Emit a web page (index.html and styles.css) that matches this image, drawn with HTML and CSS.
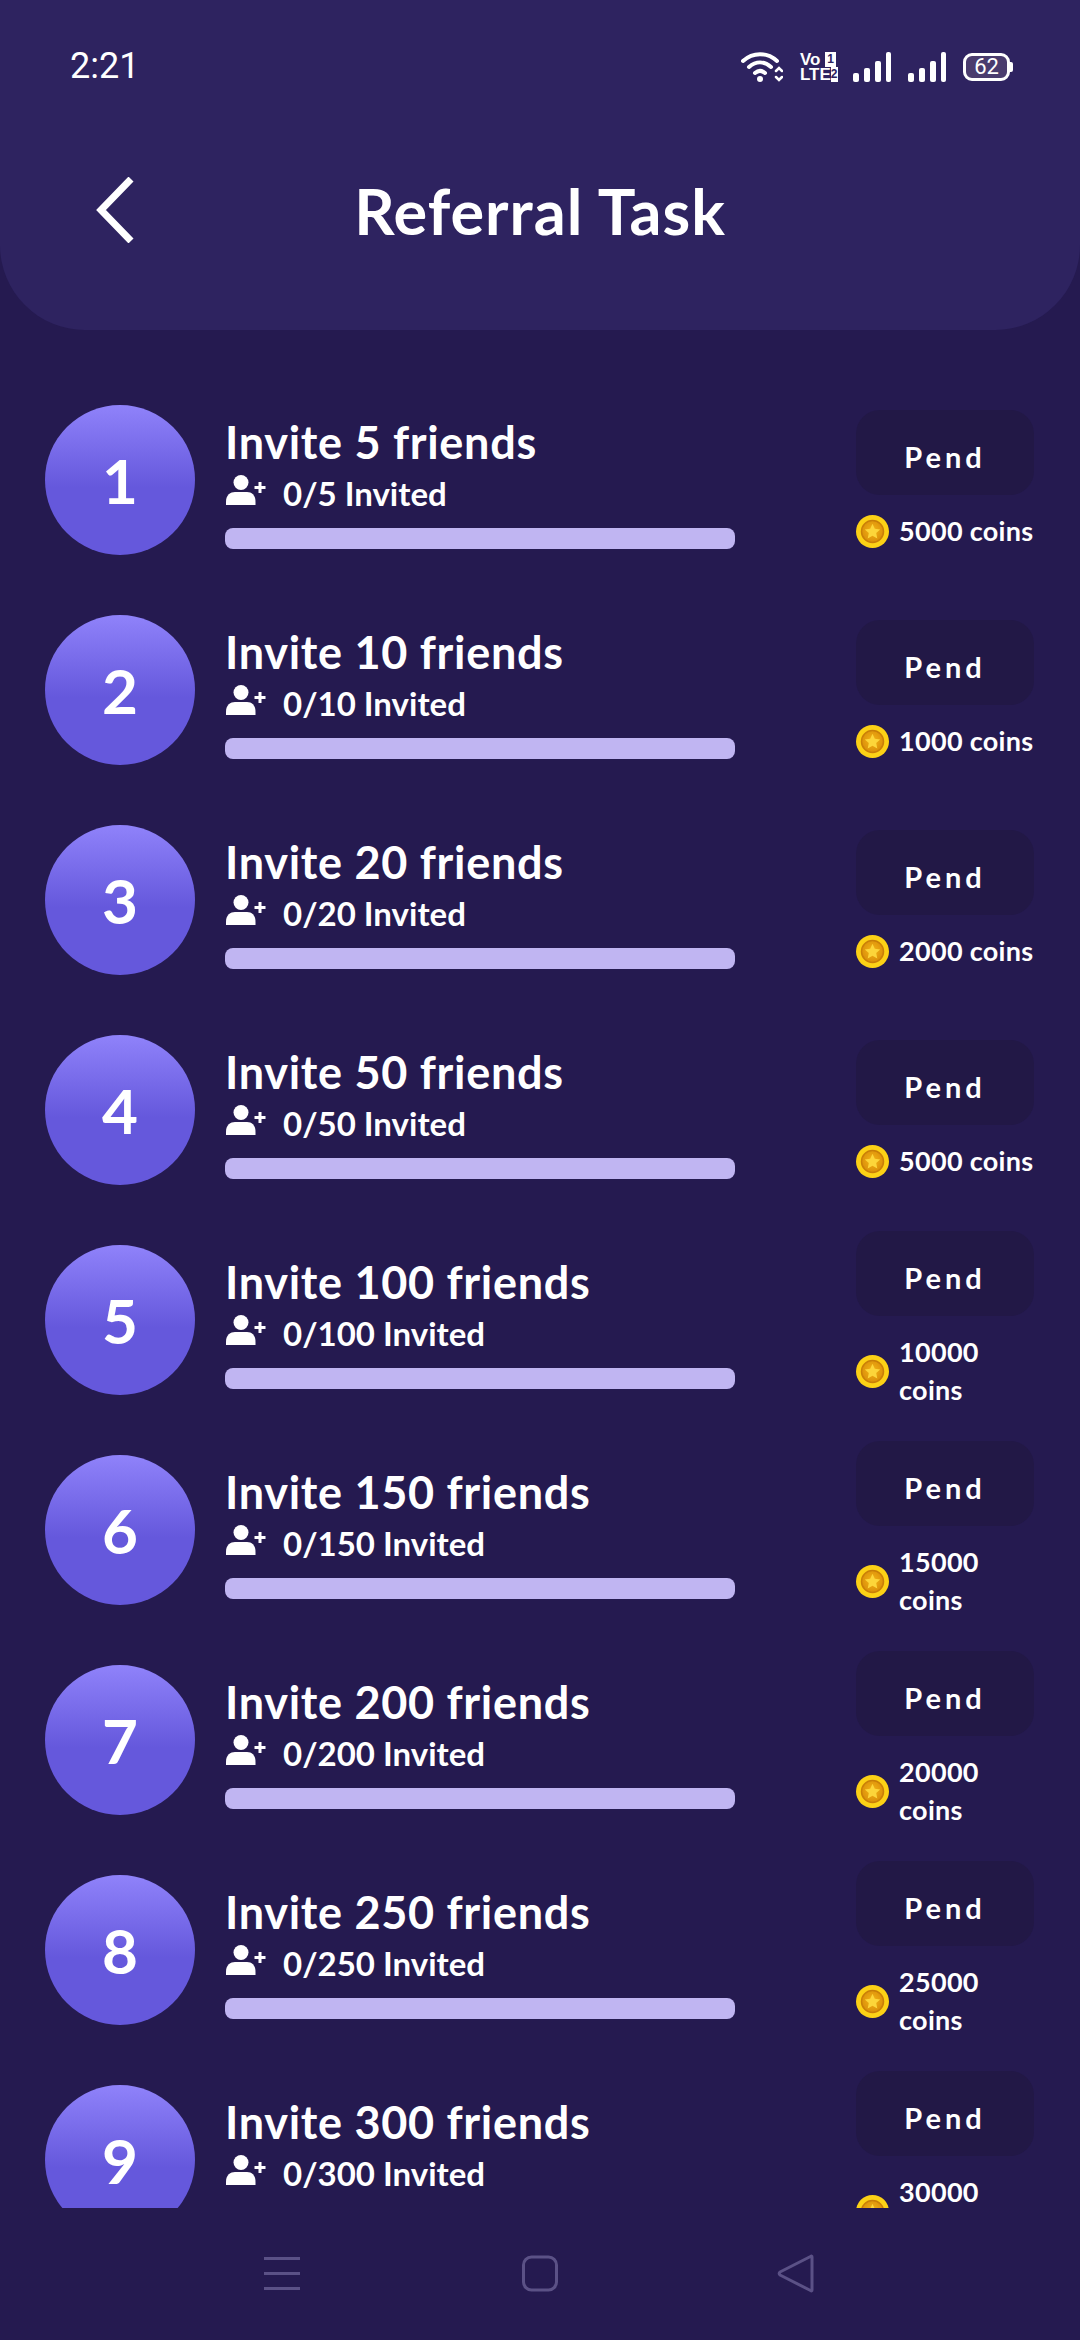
FILE: index.html
```html
<!DOCTYPE html>
<html lang="en">
<head>
    <meta charset="UTF-8">
    <title>Referral Task</title>
    <link rel="stylesheet" href="styles.css">
</head>
<body>
    <svg class="icon-defs" aria-hidden="true">
        <defs>
            <radialGradient id="coinFace" cx="50%" cy="45%" r="55%">
                <stop offset="0" stop-color="#f3b415"/>
                <stop offset="1" stop-color="#d98d0a"/>
            </radialGradient>
            <symbol id="userPlus" viewBox="0 0 40 30">
                <circle cx="15" cy="7.500" r="7.500" fill="#fff"/>
                <path d="M0 30v-3.500C0 20 4.500 17 9 17h12c4.500 0 8.500 3 8.500 9.500V30z" fill="#fff"/>
                <path d="M34 7v11M28.500 12.500h11" stroke="#fff" stroke-width="3" fill="none"/>
            </symbol>
            <symbol id="coin" viewBox="0 0 33 33">
                <circle cx="16.500" cy="16.500" r="16.500" fill="#fcd116"/>
                <path d="M28.200 4.800A16.500 16.500 0 0 1 4.800 28.200 16.500 16.500 0 0 0 28.200 4.800z" fill="#e8a20c"/>
                <circle cx="16.500" cy="16.500" r="11" fill="url(#coinFace)" stroke="#c97f08" stroke-width="1.500"/>
                <path d="M16.500 8.800l2.300 5 5.400.6-4 3.700 1.100 5.400-4.800-2.700-4.800 2.700 1.100-5.400-4-3.700 5.400-.6z" fill="#fcd53a"/>
            </symbol>
        </defs>
    </svg>

    <header class="app-header">
        <div class="status-bar">
            <span class="clock">2:21</span>
            <div class="status-icons">
                <svg class="wifi" width="42" height="32" viewBox="0 0 42 32" fill="none" stroke="#fff" stroke-linecap="round">
                    <path d="M2 10C12 1 26 1 36 10" stroke-width="4"/>
                    <path d="M8 16c7-6 15-6 22 0" stroke-width="4"/>
                    <path d="M14 22c3.500-3 6.500-3 10 0" stroke-width="4"/>
                    <circle cx="19" cy="28" r="3" fill="#fff" stroke="none"/>
                    <path d="M35 20l3-3 3 3M35 26l3 3 3-3" stroke-width="2.500"/>
                </svg>
                <div class="volte">
                    <div class="volte-line">Vo<span class="sim">1</span></div>
                    <div class="volte-line">LTE<span class="sim">2</span></div>
                </div>
                <svg width="38" height="30" viewBox="0 0 38 30" fill="#fff">
                    <rect x="0" y="21" width="6" height="9" rx="2"/>
                    <rect x="11" y="16" width="6" height="14" rx="2"/>
                    <rect x="22" y="9" width="6" height="21" rx="2"/>
                    <rect x="33" y="0" width="5" height="30" rx="2"/>
                </svg>
                <svg width="38" height="30" viewBox="0 0 38 30" fill="#fff">
                    <rect x="0" y="21" width="6" height="9" rx="2"/>
                    <rect x="11" y="16" width="6" height="14" rx="2"/>
                    <rect x="22" y="9" width="6" height="21" rx="2"/>
                    <rect x="33" y="0" width="5" height="30" rx="2"/>
                </svg>
                <div class="battery"><span class="battery-body">62</span><span class="battery-cap"></span></div>
            </div>
        </div>
        <div class="title-bar">
            <svg class="back" width="38" height="66" viewBox="0 0 38 66" fill="none" stroke="#fff" stroke-width="7">
                <path d="M35 2L5 33l30 31"/>
            </svg>
            <h1>Referral Task</h1>
        </div>
    </header>

    <main class="task-list">
        <div class="task">
            <div class="badge">1</div>
            <div class="info">
                <div class="task-title">Invite 5 friends</div>
                <div class="invited"><svg class="user-icon"><use href="#userPlus"/></svg>0/5 Invited</div>
                <div class="progress"></div>
            </div>
            <div class="reward">
                <div class="pend">Pend</div>
                <div class="coins"><svg class="coin"><use href="#coin"/></svg><span>5000 coins</span></div>
            </div>
        </div>
        <div class="task">
            <div class="badge">2</div>
            <div class="info">
                <div class="task-title">Invite 10 friends</div>
                <div class="invited"><svg class="user-icon"><use href="#userPlus"/></svg>0/10 Invited</div>
                <div class="progress"></div>
            </div>
            <div class="reward">
                <div class="pend">Pend</div>
                <div class="coins"><svg class="coin"><use href="#coin"/></svg><span>1000 coins</span></div>
            </div>
        </div>
        <div class="task">
            <div class="badge">3</div>
            <div class="info">
                <div class="task-title">Invite 20 friends</div>
                <div class="invited"><svg class="user-icon"><use href="#userPlus"/></svg>0/20 Invited</div>
                <div class="progress"></div>
            </div>
            <div class="reward">
                <div class="pend">Pend</div>
                <div class="coins"><svg class="coin"><use href="#coin"/></svg><span>2000 coins</span></div>
            </div>
        </div>
        <div class="task">
            <div class="badge">4</div>
            <div class="info">
                <div class="task-title">Invite 50 friends</div>
                <div class="invited"><svg class="user-icon"><use href="#userPlus"/></svg>0/50 Invited</div>
                <div class="progress"></div>
            </div>
            <div class="reward">
                <div class="pend">Pend</div>
                <div class="coins"><svg class="coin"><use href="#coin"/></svg><span>5000 coins</span></div>
            </div>
        </div>
        <div class="task">
            <div class="badge">5</div>
            <div class="info">
                <div class="task-title">Invite 100 friends</div>
                <div class="invited"><svg class="user-icon"><use href="#userPlus"/></svg>0/100 Invited</div>
                <div class="progress"></div>
            </div>
            <div class="reward">
                <div class="pend">Pend</div>
                <div class="coins"><svg class="coin"><use href="#coin"/></svg><span>10000 coins</span></div>
            </div>
        </div>
        <div class="task">
            <div class="badge">6</div>
            <div class="info">
                <div class="task-title">Invite 150 friends</div>
                <div class="invited"><svg class="user-icon"><use href="#userPlus"/></svg>0/150 Invited</div>
                <div class="progress"></div>
            </div>
            <div class="reward">
                <div class="pend">Pend</div>
                <div class="coins"><svg class="coin"><use href="#coin"/></svg><span>15000 coins</span></div>
            </div>
        </div>
        <div class="task">
            <div class="badge">7</div>
            <div class="info">
                <div class="task-title">Invite 200 friends</div>
                <div class="invited"><svg class="user-icon"><use href="#userPlus"/></svg>0/200 Invited</div>
                <div class="progress"></div>
            </div>
            <div class="reward">
                <div class="pend">Pend</div>
                <div class="coins"><svg class="coin"><use href="#coin"/></svg><span>20000 coins</span></div>
            </div>
        </div>
        <div class="task">
            <div class="badge">8</div>
            <div class="info">
                <div class="task-title">Invite 250 friends</div>
                <div class="invited"><svg class="user-icon"><use href="#userPlus"/></svg>0/250 Invited</div>
                <div class="progress"></div>
            </div>
            <div class="reward">
                <div class="pend">Pend</div>
                <div class="coins"><svg class="coin"><use href="#coin"/></svg><span>25000 coins</span></div>
            </div>
        </div>
        <div class="task">
            <div class="badge">9</div>
            <div class="info">
                <div class="task-title">Invite 300 friends</div>
                <div class="invited"><svg class="user-icon"><use href="#userPlus"/></svg>0/300 Invited</div>
                <div class="progress"></div>
            </div>
            <div class="reward">
                <div class="pend">Pend</div>
                <div class="coins"><svg class="coin"><use href="#coin"/></svg><span>30000 coins</span></div>
            </div>
        </div>
    </main>

    <nav class="nav-bar">
        <svg width="40" height="40" viewBox="0 0 40 40" fill="#5b5186">
            <rect x="0" y="3" width="36" height="3"/>
            <rect x="0" y="18" width="36" height="3"/>
            <rect x="0" y="33" width="36" height="3"/>
        </svg>
        <svg width="40" height="40" viewBox="0 0 40 40" fill="none" stroke="#5b5186" stroke-width="3">
            <rect x="3.500" y="3" width="33" height="33" rx="8"/>
        </svg>
        <svg width="40" height="40" viewBox="0 0 40 40" fill="none" stroke="#5b5186" stroke-width="3" stroke-linejoin="round">
            <path d="M36 3v33q0 1.500-1.500.5L4 21q-1.500-1.500 0-3L34.500 2.500Q36 1.500 36 3z"/>
        </svg>
    </nav>
</body>
</html>
```

FILE: styles.css
```css
:root {
    --page-color: #251a50;
    --header-color: #2e2360;
    --pend-color: #221846;
    --bar-color: #c0b5f2;
}

* {
    box-sizing: border-box;
}

body {
    margin: 0;
    height: 2340px;
    display: flex;
    flex-direction: column;
    overflow: hidden;
    background-color: var(--page-color);
    color: white;
    font-family: 'Lato', 'Noto Sans', sans-serif;
}

.icon-defs {
    position: absolute;
    width: 0;
    height: 0;
}

.app-header {
    flex: none;
    height: 330px;
    background-color: var(--header-color);
    border-radius: 0 0 85px 85px;
}

.status-bar {
    height: 170px;
    padding: 46px 67px 0 70px;
    display: flex;
    justify-content: space-between;
    align-items: flex-start;
}

.clock {
    font-family: 'Roboto', sans-serif;
    font-size: 36px;
    line-height: 40px;
}

.status-icons {
    display: flex;
    align-items: center;
    gap: 17px;
    padding-top: 5px;
}

.volte {
    font-family: 'Liberation Sans', sans-serif;
    font-size: 17px;
    font-weight: 700;
    line-height: 15px;
    width: 36px;
}

.volte-line {
    display: flex;
    justify-content: space-between;
}

.sim {
    background-color: white;
    color: var(--header-color);
    width: 11px;
    font-size: 12px;
    text-align: center;
}

.battery {
    display: flex;
    align-items: center;
}

.battery-body {
    width: 47px;
    height: 28px;
    border: 3px solid white;
    border-radius: 9px;
    background-color: #4a3c6e;
    font-family: 'Roboto', sans-serif;
    font-size: 22px;
    line-height: 22px;
    text-align: center;
}

.battery-cap {
    width: 3px;
    height: 10px;
    background-color: white;
    border-radius: 0 2px 2px 0;
}

.title-bar {
    position: relative;
    display: flex;
    justify-content: center;
    align-items: center;
    height: 80px;
}

.back {
    position: absolute;
    left: 96px;
    top: 7px;
}

h1 {
    margin: 0;
    font-size: 63px;
    font-weight: 700;
    letter-spacing: 1px;
}

.task-list {
    flex: none;
    height: 1878px;
    padding: 45px 46px 0 45px;
    overflow: hidden;
}

.task {
    height: 210px;
    display: flex;
    align-items: center;
    flex-shrink: 0;
}

.badge {
    flex: none;
    width: 150px;
    height: 150px;
    border-radius: 50%;
    background: linear-gradient(#8f82fa, #6558dc 55%, #6558dc);
    display: flex;
    justify-content: center;
    align-items: center;
    font-size: 62px;
    font-weight: 700;
}

.info {
    width: 510px;
    margin-left: 30px;
}

.task-title {
    font-size: 45px;
    font-weight: 700;
    letter-spacing: 0.7px;
    line-height: 62px;
}

.invited {
    display: flex;
    align-items: center;
    font-size: 33px;
    font-weight: 700;
    line-height: 40px;
}

.user-icon {
    width: 40px;
    height: 30px;
    margin-right: 17px;
    margin-top: -6px;
    margin-left: 1px;
}

.progress {
    height: 21px;
    margin-top: 15px;
    border-radius: 8px;
    background-color: var(--bar-color);
}

.reward {
    margin-left: auto;
    width: 178px;
    display: flex;
    flex-direction: column;
    gap: 17px;
}

.pend {
    height: 85px;
    padding-top: 8px;
    border-radius: 24px;
    background-color: var(--pend-color);
    display: flex;
    justify-content: center;
    align-items: center;
    font-size: 29px;
    font-weight: 700;
    letter-spacing: 4px;
}

.coins {
    display: flex;
    align-items: center;
    gap: 10px;
    font-size: 27px;
    font-weight: 700;
    letter-spacing: 0.3px;
    line-height: 38px;
}

.coin {
    flex: none;
    width: 33px;
    height: 33px;
}

.nav-bar {
    flex: 1;
    display: flex;
    justify-content: center;
    align-items: center;
    gap: 216px;
}
```
